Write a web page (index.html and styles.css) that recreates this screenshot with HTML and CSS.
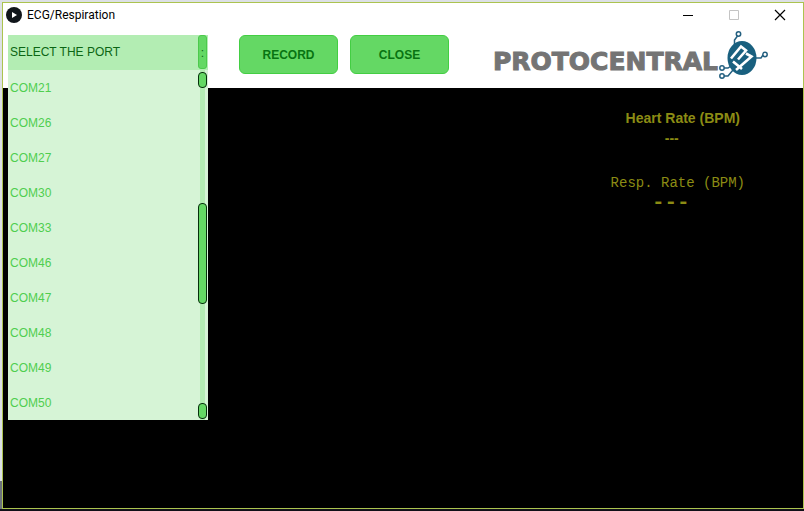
FILE: index.html
```html
<!DOCTYPE html>
<html lang="en">
<head>
<meta charset="utf-8">
<title>ECG/Respiration</title>
<link rel="stylesheet" href="styles.css">
</head>
<body>
<div class="window">
  <header class="titlebar">
    <svg class="app-icon" viewBox="0 0 16 16" aria-hidden="true"><circle cx="8" cy="8" r="8" fill="#10151a"/><path d="M6 5l5 3-5 3z" fill="#fff"/></svg>
    <h1 class="title">ECG/Respiration</h1>
    <div class="window-controls">
      <button class="control" type="button" aria-label="Minimize"><svg viewBox="0 0 12 12"><path d="M1 6.5h10" stroke="#000"/></svg></button>
      <button class="control" type="button" aria-label="Maximize" disabled><svg viewBox="0 0 12 12"><path d="M1.5 1.5h9v9h-9z" fill="none" stroke="#c4c4c4"/></svg></button>
      <button class="control" type="button" aria-label="Close window"><svg viewBox="0 0 12 12"><path d="M1 1l10 10M11 1L1 11" stroke="#000" stroke-width="1.2"/></svg></button>
    </div>
  </header>
  <div class="toolbar">
    <div class="port">
      <button class="port-toggle" type="button" aria-expanded="true" aria-controls="ports"><span>SELECT THE PORT</span><span class="port-handle">:</span></button>
      <div class="port-menu">
        <ul class="port-list" id="ports">
          <li><button type="button">COM21</button></li>
          <li><button type="button">COM26</button></li>
          <li><button type="button">COM27</button></li>
          <li><button type="button">COM30</button></li>
          <li><button type="button">COM33</button></li>
          <li><button type="button">COM46</button></li>
          <li><button type="button">COM47</button></li>
          <li><button type="button">COM48</button></li>
          <li><button type="button">COM49</button></li>
          <li><button type="button">COM50</button></li>
        </ul>
        <div class="scrollbar">
          <button class="scroll-end" type="button" aria-label="Scroll up"></button>
          <div class="scroll-track"><div class="scroll-thumb"></div></div>
          <button class="scroll-end" type="button" aria-label="Scroll down"></button>
        </div>
      </div>
    </div>
    <div class="actions">
      <button class="action" type="button">RECORD</button>
      <button class="action" type="button">CLOSE</button>
    </div>
    <div class="logo">
      <span class="wordmark">PROTOCENTRAL</span>
      <svg class="emblem" viewBox="0 0 50 50" aria-hidden="true">
        <g fill="none" stroke="#246080" stroke-width="1.500">
          <circle cx="20.500" cy="4" r="2.200"/><path d="M19.500 6l-3 4v5"/>
          <circle cx="47" cy="24.500" r="2.200"/><path d="M45 25l-2 3h-5"/>
          <circle cx="4" cy="38" r="2.200"/><path d="M6 38h4l3-2"/>
          <circle cx="4" cy="46" r="2.200"/><path d="M6 46h4l5-6"/>
        </g>
        <ellipse cx="24" cy="28" rx="14.500" ry="17" fill="#19607f"/>
        <path d="M13 28.500L23 16.500l5 4-8 9M28 23.500l5.500 3L18 40M15 31.500l9 7.500" fill="none" stroke="#fff" stroke-width="2.600"/>
      </svg>
    </div>
  </div>
  <main class="plot">
    <div class="readings">
      <section class="reading">
        <h2 class="label">Heart Rate (BPM)</h2>
        <output class="value">---</output>
      </section>
      <section class="reading reading-resp">
        <h2 class="label">Resp. Rate (BPM)</h2>
        <output class="value">---</output>
      </section>
    </div>
  </main>
</div>
</body>
</html>
```
FILE: styles.css
```css
* { box-sizing: border-box; }
body {
  margin: 0;
  min-height: 100vh;
  display: flex;
  padding: 2px 0 2px 2px;
  background: linear-gradient(#dce0e5 481px, #6d727d 481px 509px, #101018 509px);
  font-family: "Liberation Sans", Arial, sans-serif;
}
button { margin: 0; padding: 0; border: 0; background: none; font: inherit; color: inherit; }
h1, h2, ul { margin: 0; padding: 0; font: inherit; list-style: none; }
.window {
  flex: 1;
  display: flex;
  flex-direction: column;
  border: 1px solid #abc34f;
  background: #fff;
}
.titlebar { display: flex; align-items: center; height: 27px; padding: 0 0 3px 3px; }
.app-icon { width: 16px; height: 16px; margin-right: 5px; }
.title { font: 12px/16px Roboto, sans-serif; color: #000; }
.window-controls { display: flex; margin-left: auto; }
.control { display: grid; place-items: center; width: 46px; height: 24px; }
.control svg { width: 12px; height: 12px; }
.toolbar {
  display: flex;
  align-items: flex-start;
  height: 58px;
  padding: 5px;
}
.port { position: relative; width: 200px; font-size: 12px; }
.port-toggle {
  display: flex;
  align-items: flex-start;
  justify-content: space-between;
  width: 100%;
  height: 35px;
  padding: 0 1px 0 2px;
  background: #b3edb3;
  color: #0c6614;
  line-height: 35px;
}
.port-handle {
  width: 9px;
  height: 34px;
  border: 1px solid #4cc94c;
  border-radius: 3px;
  background: #64d864;
  line-height: 34px;
}
.port-menu {
  position: absolute;
  top: 35px;
  left: 0;
  display: flex;
  width: 100%;
  padding-right: 1px;
  background: #d6f4d6;
}
.port-list { flex: 1; }
.port-list button {
  display: block;
  width: 100%;
  height: 35px;
  padding-left: 2px;
  text-align: left;
  color: #4fce4f;
}
.scrollbar {
  display: flex;
  flex-direction: column;
  width: 9px;
  padding: 2px 0 1px;
  background: linear-gradient(90deg, transparent 2px, #b3edb3 2px 7px, transparent 7px);
}
.scroll-end, .scroll-thumb {
  border: 1px solid #06300c;
  border-radius: 4px;
  background: #64d864;
}
.scroll-end { height: 16px; }
.scroll-track { flex: 1; padding-top: 115px; }
.scroll-thumb { height: 101px; }
.actions { display: flex; gap: 12px; margin-left: 31px; }
.action {
  width: 99px;
  height: 39px;
  border: 1px solid #43ce43;
  border-radius: 6px;
  background: #64d864;
  color: #087412;
  font-size: 12px;
  font-weight: bold;
}
.logo { display: flex; align-items: flex-start; margin-left: auto; margin-right: 30px; margin-top: -5px; }
.wordmark {
  padding-top: 18px;
  font: bold 25px/28px "DejaVu Sans", sans-serif;
  color: #747474;
  -webkit-text-stroke: 1px #747474;
}
.emblem { width: 50px; height: 50px; }
.plot {
  flex: 1;
  display: flex;
  justify-content: flex-end;
  align-items: flex-start;
  padding: 20px 58px;
  background: #000;
  color: #8c8c14;
}
.readings { display: flex; flex-direction: column; gap: 25px; }
.reading { display: flex; flex-direction: column; align-items: center; font-size: 14px; line-height: 20px; font-weight: bold; }
.reading:first-child { padding-left: 10px; }
.reading:first-child .value { margin-right: 22px; }
.reading-resp { font: 14px/20px "Liberation Mono", monospace; }
.reading-resp .value { margin-right: 14px; font-size: 21px; font-weight: bold; }
```
